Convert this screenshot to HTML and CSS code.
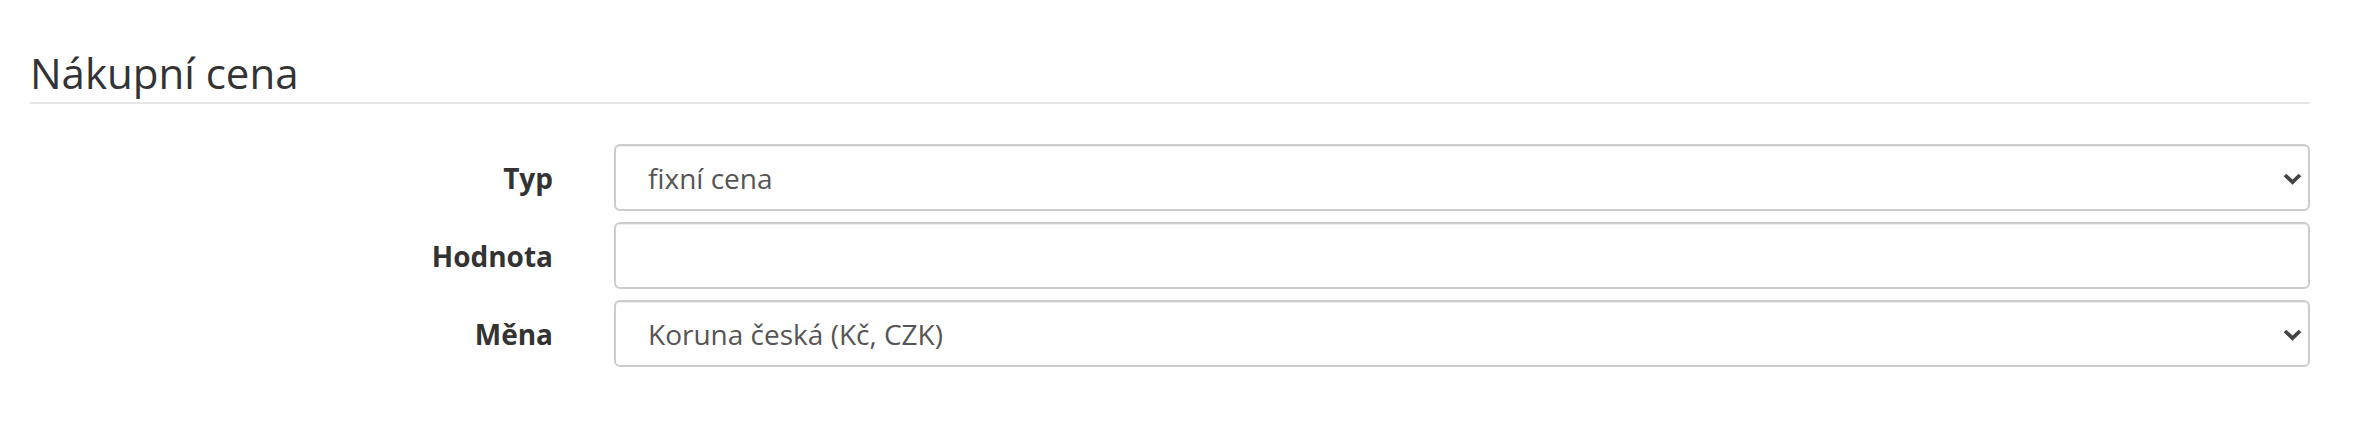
FILE: index.html
```html
<!DOCTYPE html>
<html lang="cs">
<head>
    <meta charset="UTF-8">
    <meta name="viewport" content="width=device-width, initial-scale=1.0">
    <title>Nákupní cena</title>
    <link rel="stylesheet" href="styles.css">
</head>
<body>

    <div class="price-section">
        <h2 class="section-title">Nákupní cena</h2>

        <div class="form-grid">
            <label class="form-label" for="price-type">Typ</label>
            <div class="select-wrap">
                <select id="price-type" class="form-control">
                    <option>fixní cena</option>
                    <option>procento z prodejní ceny</option>
                </select>
                <svg class="chevron" viewBox="0 0 19 12" width="19" height="12">
                    <path d="M2 2 L9.5 9.2 L17 2" fill="none" stroke="#444" stroke-width="3.8"/>
                </svg>
            </div>

            <label class="form-label" for="price-value">Hodnota</label>
            <input type="text" id="price-value" class="form-control">

            <label class="form-label" for="price-currency">Měna</label>
            <div class="select-wrap">
                <select id="price-currency" class="form-control">
                    <option>Koruna česká (Kč, CZK)</option>
                    <option>Euro (€, EUR)</option>
                </select>
                <svg class="chevron" viewBox="0 0 19 12" width="19" height="12">
                    <path d="M2 2 L9.5 9.2 L17 2" fill="none" stroke="#444" stroke-width="3.8"/>
                </svg>
            </div>
        </div>
    </div>

</body>
</html>
```

FILE: styles.css
```css
body {
    font-family: 'Open Sans', sans-serif;
    background-color: #fff;
    color: #333;
    margin: 0;
    padding: 0;
}

.price-section {
    width: 2280px;
    padding: 0 30px;
}

.section-title {
    font-size: 42px;
    font-weight: 400;
    line-height: 58px;
    color: #333;
    margin: 44px 0 0 0;
    padding-bottom: 0;
    border-bottom: 2px solid #e5e5e5;
}

.form-grid {
    display: grid;
    grid-template-columns: 523px 1fr;
    column-gap: 61px;
    row-gap: 11px;
    margin-top: 40px;
    align-items: center;
}

.form-label {
    text-align: right;
    font-size: 28px;
    font-weight: 700;
    color: #333;
}

.form-control {
    display: block;
    width: 100%;
    height: 67px;
    box-sizing: border-box;
    padding: 0 60px 0 32px;
    border: 2px solid #ccc;
    border-radius: 6px;
    background-color: #fff;
    font-family: 'Open Sans', sans-serif;
    font-size: 28px;
    color: #555;
    box-shadow: inset 0 1px 1px rgba(0, 0, 0, 0.075);
    outline: none;
}

select.form-control {
    -webkit-appearance: none;
    appearance: none;
}

.select-wrap {
    position: relative;
}

.chevron {
    position: absolute;
    right: 8px;
    top: 29px;
    pointer-events: none;
}
```
